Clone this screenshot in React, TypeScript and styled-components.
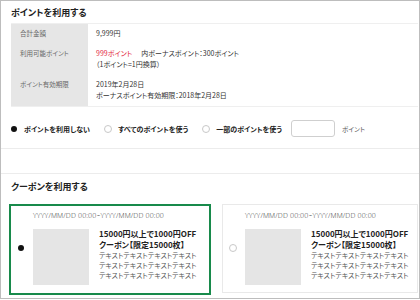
import React from "react";
import styled, { createGlobalStyle } from "styled-components";

const GlobalStyle = createGlobalStyle`
  html, body { margin: 0; padding: 0; background: #fff; }
  body {
    font-family: "Noto Sans CJK JP", "Noto Sans", sans-serif;
    font-feature-settings: "palt";
    color: #333;
  }
  * { box-sizing: border-box; }
`;

const Frame = styled.div`
  width: 420px;
  height: 299px;
  border: 1px solid #bdbdbd;
  overflow: hidden;
  background: #fff;
`;

const PointSection = styled.section`
  padding: 6px 0 11px 0;
  border-bottom: 1px solid #ececec;
`;

const SectionTitle = styled.h2`
  margin: 0 0 0 10px;
  font-size: 9px;
  line-height: 12px;
  font-weight: 700;
  color: #222;
`;

const InfoTable = styled.div`
  margin: 4px 1px 0 10px;
  display: grid;
  grid-template-columns: 77px 1fr;
  border-top: 1px solid #efefef;
  border-bottom: 1px solid #efefef;
`;

const LabelCell = styled.div`
  background: #e6e6e6;
  padding: 4px 9px 5px;
  font-size: 6.5px;
  line-height: 11px;
  color: #666;
`;

const ValueCell = styled.div`
  padding: 4px 8px 5px;
  font-size: 7px;
  line-height: 11px;
  color: #333;
`;

const Red = styled.span`
  color: #e3263c;
  margin-right: 9px;
`;

const RadioRow = styled.div`
  margin-top: 13px;
  height: 17px;
  display: flex;
  align-items: center;
  padding-left: 9px;
`;

const RadioItem = styled.label`
  display: flex;
  align-items: center;
  gap: 6px;
  margin-right: 14px;
  font-size: 7px;
  font-weight: 700;
  color: #222;
  &:last-of-type {
    margin-right: 9px;
  }
`;

const Radio = styled.span<{ $checked?: boolean }>`
  width: 8px;
  height: 8px;
  border-radius: 50%;
  flex: none;
  border: 1px solid ${(p) => (p.$checked ? "transparent" : "#c8c8c8")};
  background: #fff;
  display: flex;
  align-items: center;
  justify-content: center;
  &::after {
    content: "";
    width: 6px;
    height: 6px;
    border-radius: 50%;
    background: ${(p) => (p.$checked ? "#111" : "transparent")};
  }
`;

const PointInput = styled.div`
  width: 44px;
  height: 17px;
  border: 1px solid #cfcfcf;
  border-radius: 3px;
`;

const Unit = styled.span`
  margin-left: 7px;
  font-size: 6.5px;
  color: #555;
`;

const CouponSection = styled.section`
  margin-top: 24px;
  border-top: 1px solid #ececec;
  padding-top: 7px;
`;

const CardRow = styled.div`
  margin-top: 11px;
  display: flex;
  gap: 11px;
  padding: 0 1px 0 8px;
  align-items: flex-start;
`;

const Card = styled.div<{ $selected?: boolean }>`
  flex: ${(p) => (p.$selected ? "0 0 202px" : "1 1 auto")};
  height: ${(p) => (p.$selected ? "91px" : "89px")};
  border: ${(p) => (p.$selected ? "2px solid #188a4b" : "1px solid #e9e9e9")};
  padding: ${(p) => (p.$selected ? "5px 0 8px 6px" : "6px 0 8px 6px")};
  display: flex;
  align-items: center;
  gap: 8px;
  background: #fff;
`;

const CardBody = styled.div`
  display: flex;
  flex-direction: column;
  gap: 8px;
  align-self: flex-start;
`;

const Period = styled.div`
  font-family: "Open Sans", "Noto Sans CJK JP", sans-serif;
  font-size: 7px;
  line-height: 10px;
  color: #333;
  font-weight: 300;
  letter-spacing: 0.15px;
  white-space: nowrap;
`;

const CouponMain = styled.div`
  display: flex;
  gap: 10px;
`;

const Thumb = styled.div`
  width: 56px;
  height: 56px;
  flex: none;
  background: #e5e5e5;
`;

const CouponText = styled.div`
  display: flex;
  flex-direction: column;
`;

const CouponTitle = styled.div`
  font-size: 8px;
  line-height: 11px;
  font-weight: 700;
  color: #222;
  margin-top: -1px;
  white-space: nowrap;
`;

const CouponDesc = styled.div`
  font-size: 7px;
  line-height: 10px;
  color: #555;
  white-space: nowrap;
`;

const coupons = [
  { selected: true },
  { selected: false },
];

export default function App() {
  return (
    <>
      <GlobalStyle />
      <Frame>
        <PointSection>
          <SectionTitle>ポイントを利用する</SectionTitle>
          <InfoTable>
            <LabelCell>合計金額</LabelCell>
            <ValueCell>9,999円</ValueCell>
            <LabelCell>利用可能ポイント</LabelCell>
            <ValueCell>
              <Red>999ポイント</Red>内ボーナスポイント：300ポイント
              <br />
              （1ポイント=1円換算）
            </ValueCell>
            <LabelCell>ポイント有効期限</LabelCell>
            <ValueCell>
              2019年2月28日
              <br />
              ボーナスポイント有効期限：2018年2月28日
            </ValueCell>
          </InfoTable>
          <RadioRow>
            <RadioItem>
              <Radio $checked />
              ポイントを利用しない
            </RadioItem>
            <RadioItem>
              <Radio />
              すべてのポイントを使う
            </RadioItem>
            <RadioItem>
              <Radio />
              一部のポイントを使う
            </RadioItem>
            <PointInput />
            <Unit>ポイント</Unit>
          </RadioRow>
        </PointSection>
        <CouponSection>
          <SectionTitle>クーポンを利用する</SectionTitle>
          <CardRow>
            {coupons.map((c, i) => (
              <Card key={i} $selected={c.selected}>
                <Radio $checked={c.selected} />
                <CardBody>
                  <Period>YYYY/MM/DD 00:00~YYYY/MM/DD 00:00</Period>
                  <CouponMain>
                    <Thumb />
                    <CouponText>
                      <CouponTitle>
                        15000円以上で1000円OFF
                        <br />
                        クーポン【限定15000枚】
                      </CouponTitle>
                      <CouponDesc>
                        テキストテキストテキストテキスト
                        <br />
                        テキストテキストテキストテキスト
                        <br />
                        テキストテキストテキストテキスト
                      </CouponDesc>
                    </CouponText>
                  </CouponMain>
                </CardBody>
              </Card>
            ))}
          </CardRow>
        </CouponSection>
      </Frame>
    </>
  );
}
